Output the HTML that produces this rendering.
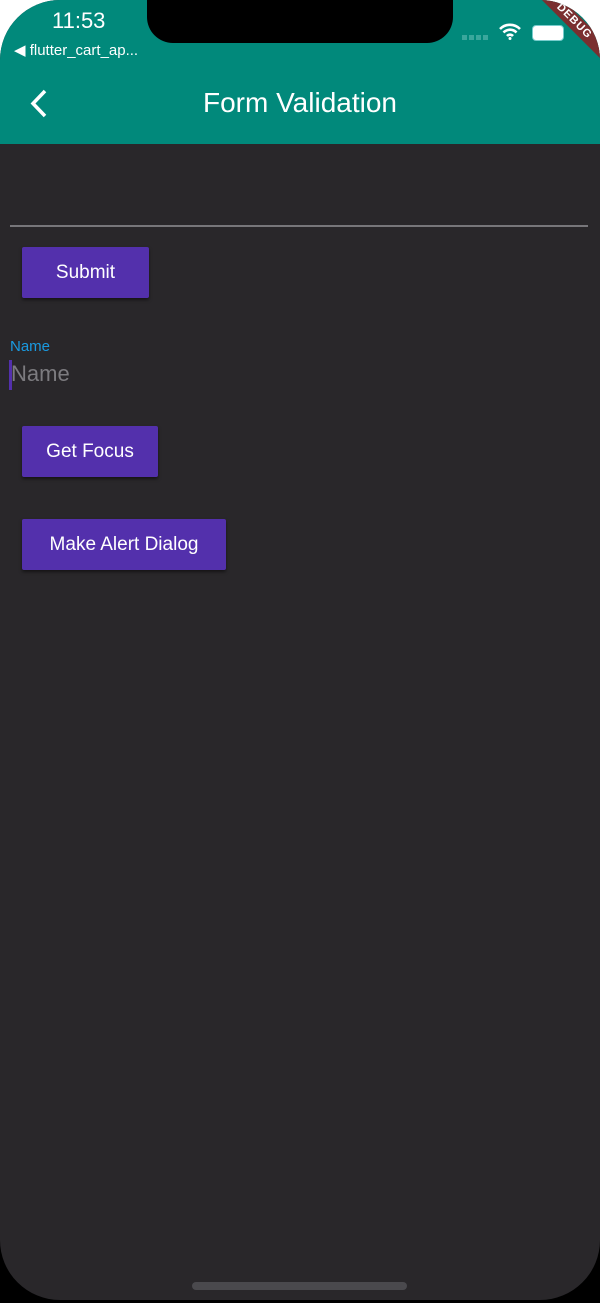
<!DOCTYPE html>
<html><head><meta charset="utf-8"><style>
html,body{margin:0;padding:0}
body{width:600px;height:1303px;background:linear-gradient(#fff 0 60px,#000 60px);position:relative;overflow:hidden;font-family:"Liberation Sans",sans-serif}
.screen{position:absolute;left:0;top:0;width:600px;height:1300px;background:#29272a;border-radius:60px;overflow:hidden}
.bar{position:absolute;left:0;top:0;width:600px;height:144px;background:#01897b}
.notch{position:absolute;left:147px;top:-2px;width:306px;height:45px;background:#000;border-radius:0 0 26px 26px}
.time{position:absolute;left:52px;top:8px;color:#fff;font-size:22px}
.back{position:absolute;left:14px;top:41px;color:#fff;font-size:15px}
.title{position:absolute;left:0;width:600px;top:87px;text-align:center;color:#fff;font-size:28px}
.btn{position:absolute;left:22px;height:51px;background:#5330ac;color:#fff;font-size:19px;line-height:51px;text-align:center;border-radius:2px;box-shadow:0 2px 3px rgba(0,0,0,.5)}
.debug{position:absolute;right:-44px;top:14px;width:140px;transform:rotate(45deg);background:#7a2f2f;color:#fff;font-size:11px;font-weight:bold;text-align:center;line-height:15px;letter-spacing:1px}
</style></head><body>
<div class="screen">
<div class="bar"></div>
<div class="notch"></div>
<div class="time">11:53</div>
<div class="back">◀ flutter_cart_ap...</div>
<div style="position:absolute;left:462px;top:35px;width:28px;height:5px;background:repeating-linear-gradient(90deg,#3aa79c 0 5px,transparent 5px 7px)"></div>
<svg style="position:absolute;left:499px;top:22px" width="22" height="18" viewBox="0 0 22 18"><path d="M1 7a14 14 0 0 1 20 0M4.5 10.5a9 9 0 0 1 13 0M8 14a4 4 0 0 1 6 0" stroke="#fff" stroke-width="2.6" fill="none"/><circle cx="11" cy="16.5" r="1.5" fill="#fff"/></svg>
<div style="position:absolute;left:532px;top:25px;width:30px;height:14px;border:1.5px solid #7cc;border-radius:4px;background:#fff"></div>
<div class="debug">DEBUG</div>
<svg style="position:absolute;left:28px;top:88px" width="22" height="32" viewBox="0 0 22 32"><path d="M17 3L5 15.5 17 28" stroke="#fff" stroke-width="3.5" fill="none"/></svg>
<div class="title">Form Validation</div>
<div style="position:absolute;left:10px;top:225px;width:578px;height:2px;background:#77767a"></div>
<div class="btn" style="top:247px;width:127px">Submit</div>
<div style="position:absolute;left:10px;top:338px;color:#1a9ae0;font-size:15px">Name</div>
<div style="position:absolute;left:9px;top:360px;width:3px;height:30px;background:#5330ac"></div>
<div style="position:absolute;left:11px;top:361px;color:#7c7b7f;font-size:22px">Name</div>
<div class="btn" style="top:426px;width:136px">Get Focus</div>
<div class="btn" style="top:519px;width:204px">Make Alert Dialog</div>
<div style="position:absolute;left:192px;top:1282px;width:215px;height:8px;border-radius:4px;background:#4a494d"></div>
</div>
</body></html>
